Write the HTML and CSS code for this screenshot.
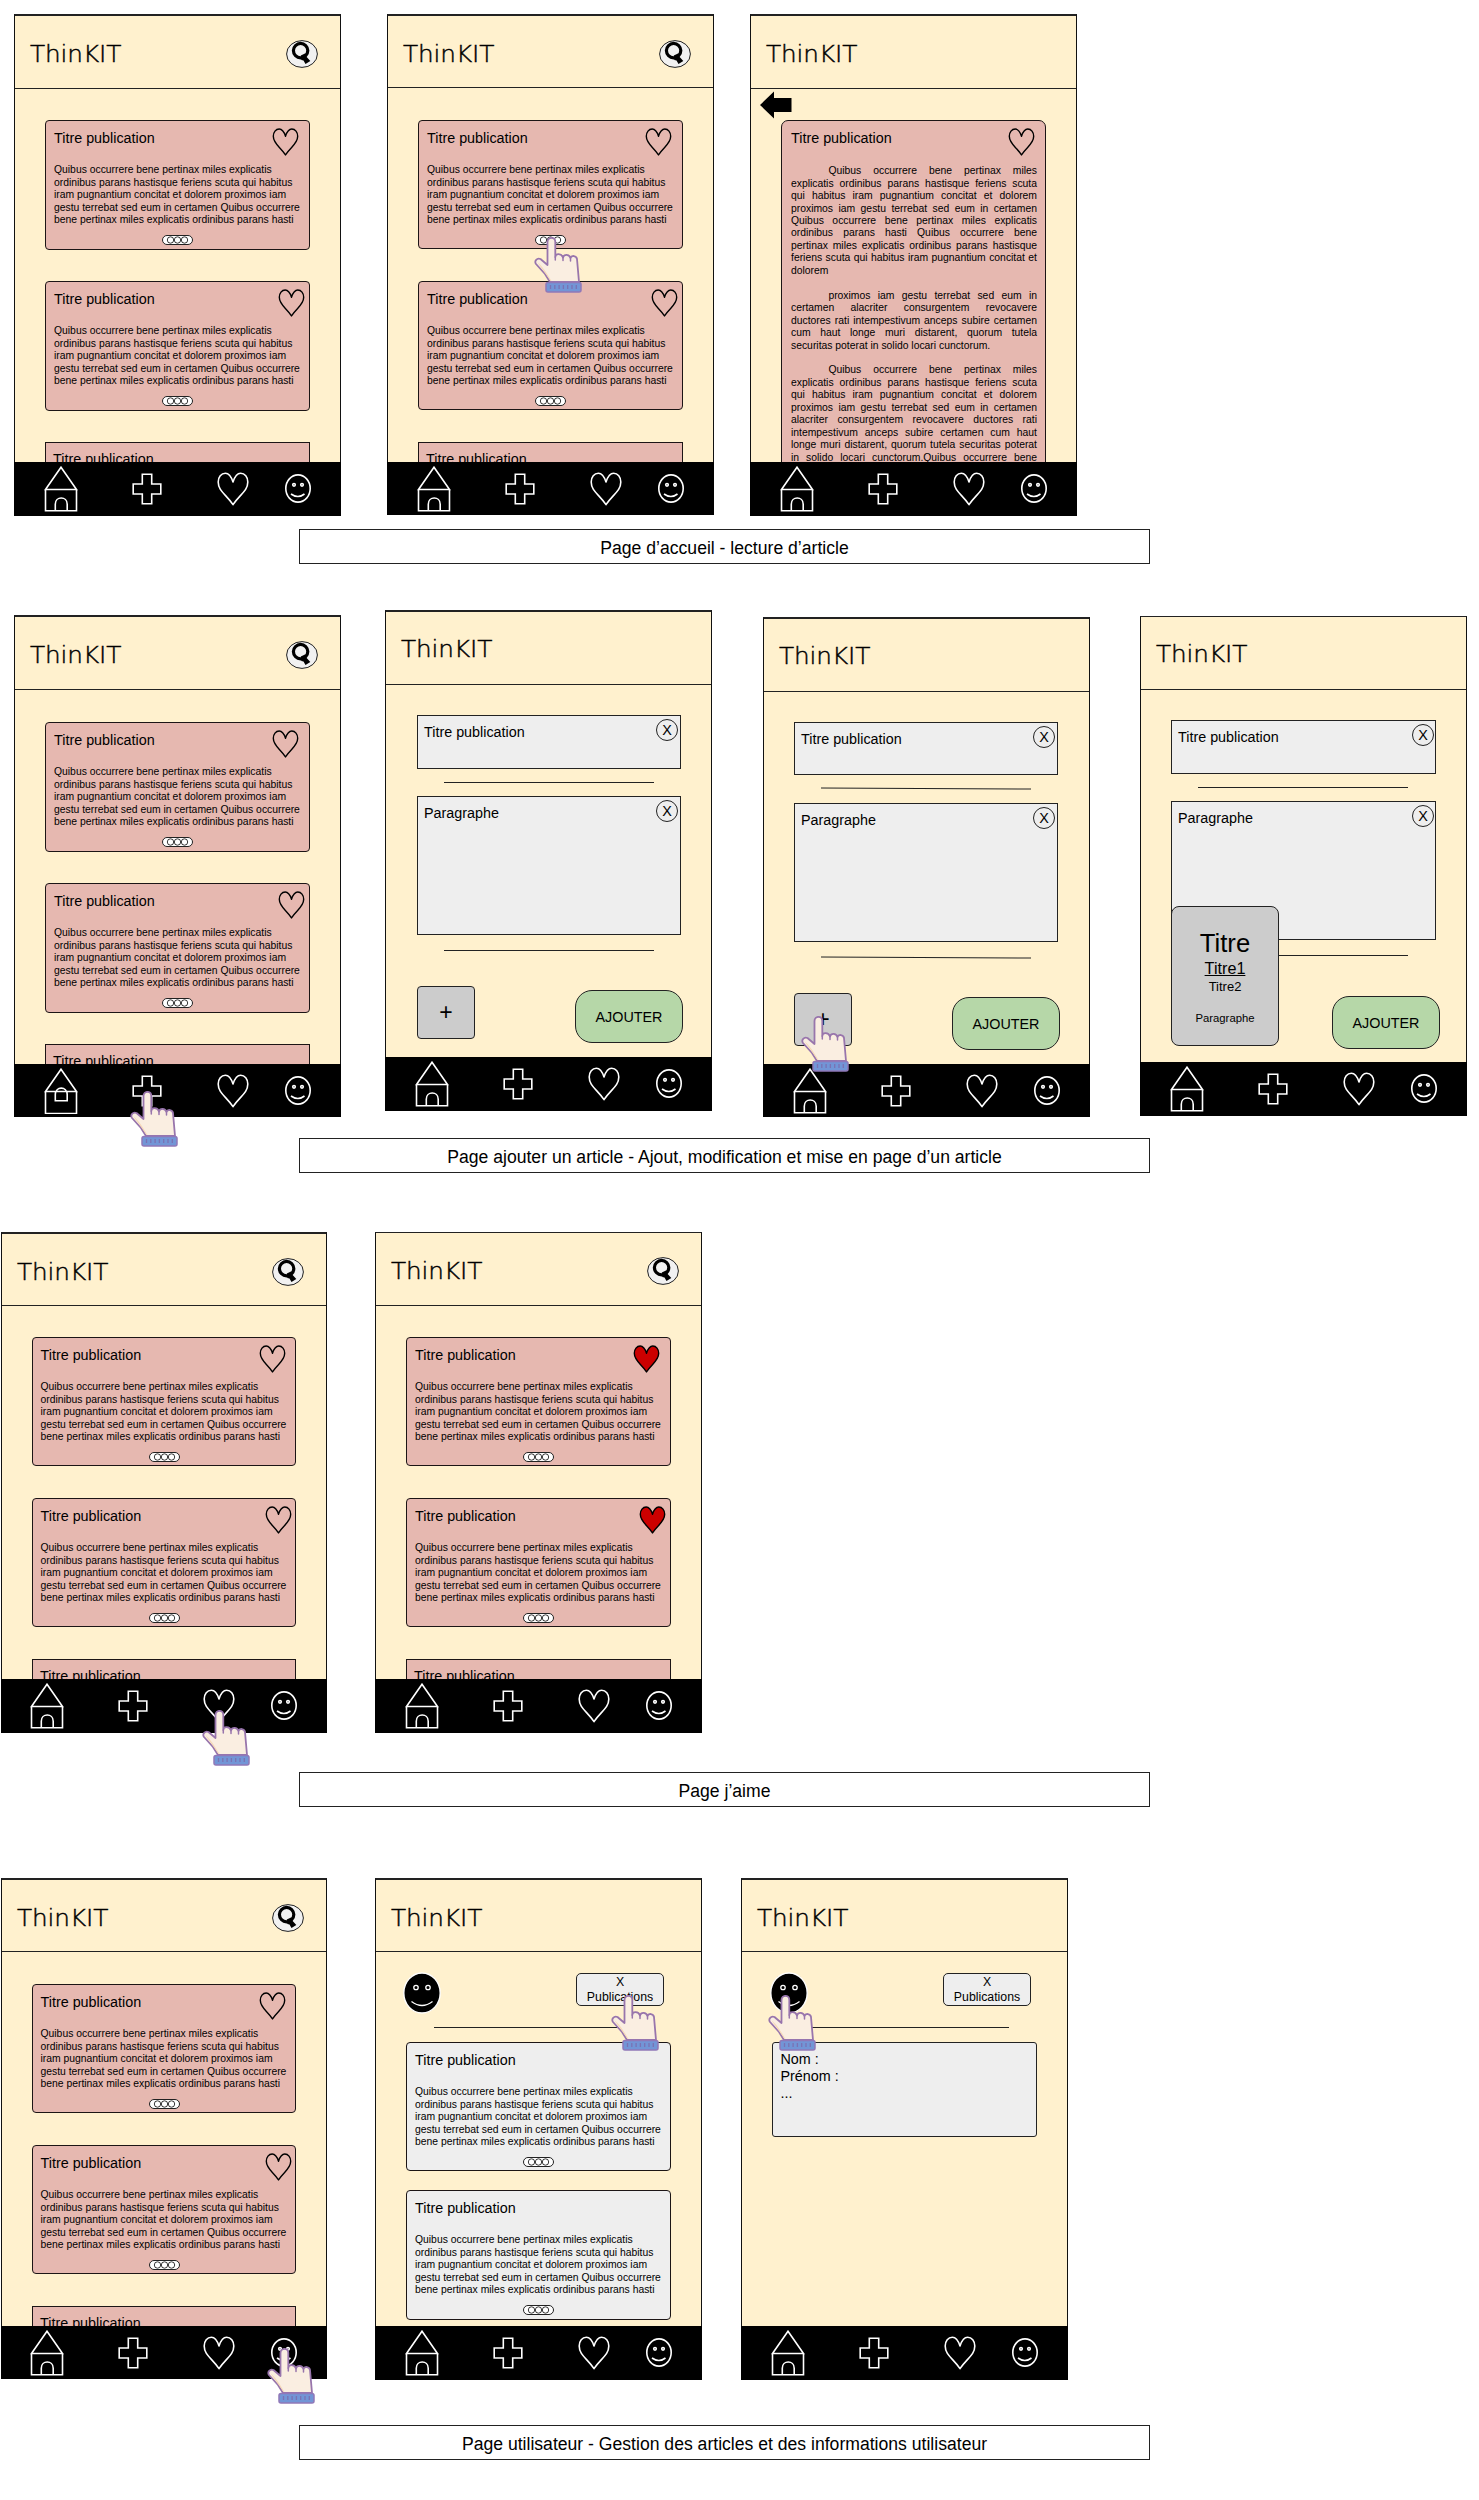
FILE: index.html
```html
<!DOCTYPE html>
<html lang="fr">
<head>
<meta charset="utf-8">
<title>ThinKIT - maquettes</title>
<link rel="stylesheet" href="styles.css">
</head>
<body>
<svg class="sprite" aria-hidden="true">
  <symbol id="search" viewBox="0 0 32 28">
    <ellipse cx="16" cy="14" rx="15.4" ry="13.4" fill="#f1f1f1" stroke="#222" stroke-width="1"/>
    <circle cx="14.6" cy="10.600" r="7.200" fill="none" stroke="#000" stroke-width="3.200"/>
    <path d="M14.8 15.500L19.5 13.200L20.200 16.500L24.300 21L19.5 24L17.5 20.500L15.3 20Z"/>
  </symbol>
  <symbol id="heart" viewBox="0 0 32 34">
    <path d="M16 10C14.4 5.200 11.900 1.300 8.400 1.300C4.200 1.300 1.200 5.100 1.200 10.100C1.200 19.300 9.800 22.800 16 32.700C22.200 22.800 30.800 19.300 30.800 10.100C30.800 5.100 27.800 1.300 23.600 1.300C20.100 1.300 17.600 5.200 16 10Z" stroke-linejoin="round"/>
  </symbol>
  <symbol id="house" viewBox="0 0 34 46">
    <path d="M1.500 23.500L17 1.200L32.500 23.500ZM1.500 23.500V44.700H32.500V23.500M11.300 44.700V38.200C11.300 30 23.200 30 23.200 38.200V44.700"/>
  </symbol>
  <symbol id="house-up" viewBox="0 0 34 46">
    <path d="M1.500 23.500L17 1.200L32.500 23.500ZM1.500 23.500V45.500H32.500V23.500M11.300 32.800V26.500C11.300 18 23.200 18 23.200 26.500V32.800Z"/>
  </symbol>
  <symbol id="plus" viewBox="0 0 30 32">
    <path d="M10.300 1.200H19.700V11H28.800V21H19.700V30.800H10.300V21H1.200V11H10.300Z"/>
  </symbol>
  <symbol id="smile" viewBox="0 0 26 29">
    <ellipse cx="13" cy="14.500" rx="12.200" ry="13.600"/>
    <circle cx="9" cy="10.800" r="1.300"/><circle cx="17" cy="10.800" r="1.300"/>
    <path d="M6 20Q13 25 19.500 20"/>
  </symbol>
  <symbol id="face" viewBox="0 0 38 42">
    <ellipse cx="19" cy="21" rx="18.200" ry="20" fill="#000" stroke="#fff" stroke-width="1.400"/>
    <g fill="none" stroke="#fff" stroke-width="1.300"><circle cx="13" cy="15.500" r="2.200"/><circle cx="25" cy="15.500" r="2.200"/><path d="M8.500 29.500Q19 37.500 29.500 29.500"/></g>
  </symbol>
  <symbol id="dots" viewBox="0 0 31 10">
    <rect x=".5" y=".5" width="30" height="9" rx="4.500" fill="#fff" stroke="#222"/>
    <g fill="#fff" stroke="#222" stroke-width=".9"><circle cx="8.500" cy="5" r="3.200"/><circle cx="15.500" cy="5" r="3.200"/><circle cx="22.500" cy="5" r="3.200"/></g>
  </symbol>
  <symbol id="hand" viewBox="0 0 48 56">
    <path d="M16 45L11 37L2 27C0 24 3 20.500 6.500 22L13.500 28V5C13.500 -0.500 21.300 -0.500 21.300 5V20C21.500 16 27.500 16 29 20.500C30 17 35 17 36.500 21C37.500 18 42.500 18.500 43 22L45 45Z" fill="#faeee1" stroke="#9875ac" stroke-width="1.800" stroke-linejoin="round"/>
    <path d="M3.500 25.500C8 29 11 33 17.500 44H16.500L11 36Z" fill="#f6d9b8"/>
    <path d="M21.300 20V23M29 20.500V23.500M36.500 21V24" stroke="#9875ac" stroke-width="1.500" stroke-linecap="round"/>
    <rect x="12" y="45.500" width="35" height="9.500" rx="2" fill="#7295d6" stroke="#9078b8" stroke-width="1.500"/>
    <path d="M16.500 48V52M20.800 48V52M25.100 48V52M29.400 48V52M33.700 48V52M38 48V52M42.300 48V52" stroke="#7a72b4" stroke-width="1.300"/>
  </symbol>
</svg>

<section>
  <div class="board b1">
    <div class="phone p1">
      <header><span class="logo">ThinKIT</span><svg class="search"><use href="#search"/></svg></header>
      <main class="feed">
        <article class="card"><h2>Titre publication</h2><p>Quibus occurrere bene pertinax miles explicatis<br>ordinibus parans hastisque feriens scuta qui habitus<br>iram pugnantium concitat et dolorem proximos iam<br>gestu terrebat sed eum in certamen Quibus occurrere<br>bene pertinax miles explicatis ordinibus parans hasti</p><svg class="dots"><use href="#dots"/></svg><svg class="like"><use href="#heart"/></svg></article>
        <article class="card"><h2>Titre publication</h2><p>Quibus occurrere bene pertinax miles explicatis<br>ordinibus parans hastisque feriens scuta qui habitus<br>iram pugnantium concitat et dolorem proximos iam<br>gestu terrebat sed eum in certamen Quibus occurrere<br>bene pertinax miles explicatis ordinibus parans hasti</p><svg class="dots"><use href="#dots"/></svg><svg class="like"><use href="#heart"/></svg></article>
        <article class="card"><h2>Titre publication</h2></article>
      </main>
      <nav><svg class="house"><use href="#house"/></svg><svg class="plus"><use href="#plus"/></svg><svg class="heart"><use href="#heart"/></svg><svg class="smile"><use href="#smile"/></svg></nav>
    </div>
    <div class="phone p2">
      <header><span class="logo">ThinKIT</span><svg class="search"><use href="#search"/></svg></header>
      <main class="feed">
        <article class="card"><h2>Titre publication</h2><p>Quibus occurrere bene pertinax miles explicatis<br>ordinibus parans hastisque feriens scuta qui habitus<br>iram pugnantium concitat et dolorem proximos iam<br>gestu terrebat sed eum in certamen Quibus occurrere<br>bene pertinax miles explicatis ordinibus parans hasti</p><svg class="dots"><use href="#dots"/></svg><svg class="like"><use href="#heart"/></svg></article>
        <article class="card"><h2>Titre publication</h2><p>Quibus occurrere bene pertinax miles explicatis<br>ordinibus parans hastisque feriens scuta qui habitus<br>iram pugnantium concitat et dolorem proximos iam<br>gestu terrebat sed eum in certamen Quibus occurrere<br>bene pertinax miles explicatis ordinibus parans hasti</p><svg class="dots"><use href="#dots"/></svg><svg class="like"><use href="#heart"/></svg></article>
        <article class="card"><h2>Titre publication</h2></article>
      </main>
      <nav><svg class="house"><use href="#house"/></svg><svg class="plus"><use href="#plus"/></svg><svg class="heart"><use href="#heart"/></svg><svg class="smile"><use href="#smile"/></svg></nav>
      <svg class="hand"><use href="#hand"/></svg>
    </div>
    <div class="phone p3">
      <header><span class="logo">ThinKIT</span></header>
      <main class="reader">
        <svg class="back" viewBox="0 0 32 28"><path d="M0 14L14 0.500V7H31.500V21H14V27.500Z"/></svg>
        <article class="card full"><h2>Titre publication</h2>
          <p>Quibus occurrere bene pertinax miles explicatis ordinibus parans hastisque feriens scuta qui habitus iram pugnantium concitat et dolorem proximos iam gestu terrebat sed eum in certamen Quibus occurrere bene pertinax miles explicatis ordinibus parans hasti Quibus occurrere bene pertinax miles explicatis ordinibus parans hastisque feriens scuta qui habitus iram pugnantium concitat et dolorem</p>
          <p>proximos iam gestu terrebat sed eum in certamen alacriter consurgentem revocavere ductores rati intempestivum anceps subire certamen cum haut longe muri distarent, quorum tutela securitas poterat in solido locari cunctorum.</p>
          <p>Quibus occurrere bene pertinax miles explicatis ordinibus parans hastisque feriens scuta qui habitus iram pugnantium concitat et dolorem proximos iam gestu terrebat sed eum in certamen alacriter consurgentem revocavere ductores rati intempestivum anceps subire certamen cum haut longe muri distarent, quorum tutela securitas poterat in solido locari cunctorum.Quibus occurrere bene pertinax miles</p>
          <svg class="like"><use href="#heart"/></svg>
        </article>
      </main>
      <nav><svg class="house"><use href="#house"/></svg><svg class="plus"><use href="#plus"/></svg><svg class="heart"><use href="#heart"/></svg><svg class="smile"><use href="#smile"/></svg></nav>
    </div>
  </div>
  <div class="caption">Page d’accueil - lecture d’article</div>
</section>

<section>
  <div class="board b2">
    <div class="phone p4">
      <header><span class="logo">ThinKIT</span><svg class="search"><use href="#search"/></svg></header>
      <main class="feed">
        <article class="card"><h2>Titre publication</h2><p>Quibus occurrere bene pertinax miles explicatis<br>ordinibus parans hastisque feriens scuta qui habitus<br>iram pugnantium concitat et dolorem proximos iam<br>gestu terrebat sed eum in certamen Quibus occurrere<br>bene pertinax miles explicatis ordinibus parans hasti</p><svg class="dots"><use href="#dots"/></svg><svg class="like"><use href="#heart"/></svg></article>
        <article class="card"><h2>Titre publication</h2><p>Quibus occurrere bene pertinax miles explicatis<br>ordinibus parans hastisque feriens scuta qui habitus<br>iram pugnantium concitat et dolorem proximos iam<br>gestu terrebat sed eum in certamen Quibus occurrere<br>bene pertinax miles explicatis ordinibus parans hasti</p><svg class="dots"><use href="#dots"/></svg><svg class="like"><use href="#heart"/></svg></article>
        <article class="card"><h2>Titre publication</h2></article>
      </main>
      <nav><svg class="house"><use href="#house-up"/></svg><svg class="plus"><use href="#plus"/></svg><svg class="heart"><use href="#heart"/></svg><svg class="smile"><use href="#smile"/></svg></nav>
      <svg class="hand"><use href="#hand"/></svg>
    </div>
    <div class="phone p5">
      <header><span class="logo">ThinKIT</span></header>
      <main class="editor">
        <div class="field small"><span>Titre publication</span><b class="close">X</b></div>
        <hr>
        <div class="field big"><span>Paragraphe</span><b class="close">X</b></div>
        <hr>
        <div class="actions"><span class="add">+</span><span class="submit">AJOUTER</span></div>
      </main>
      <nav><svg class="house"><use href="#house"/></svg><svg class="plus"><use href="#plus"/></svg><svg class="heart"><use href="#heart"/></svg><svg class="smile"><use href="#smile"/></svg></nav>
    </div>
    <div class="phone p6">
      <header><span class="logo">ThinKIT</span></header>
      <main class="editor">
        <div class="field small"><span>Titre publication</span><b class="close">X</b></div>
        <hr>
        <div class="field big"><span>Paragraphe</span><b class="close">X</b></div>
        <hr>
        <div class="actions"><span class="add">+</span><span class="submit">AJOUTER</span></div>
      </main>
      <nav><svg class="house"><use href="#house"/></svg><svg class="plus"><use href="#plus"/></svg><svg class="heart"><use href="#heart"/></svg><svg class="smile"><use href="#smile"/></svg></nav>
      <svg class="hand"><use href="#hand"/></svg>
    </div>
    <div class="phone p7">
      <header><span class="logo">ThinKIT</span></header>
      <main class="editor">
        <div class="field small"><span>Titre publication</span><b class="close">X</b></div>
        <hr>
        <div class="field big"><span>Paragraphe</span><b class="close">X</b></div>
        <hr>
        <div class="actions"><span class="submit">AJOUTER</span></div>
      </main>
      <nav><svg class="house"><use href="#house"/></svg><svg class="plus"><use href="#plus"/></svg><svg class="heart"><use href="#heart"/></svg><svg class="smile"><use href="#smile"/></svg></nav>
      <div class="menu"><span class="m0">Titre</span><span class="m1">Titre1</span><span class="m2">Titre2</span><span class="m3">Paragraphe</span></div>
    </div>
  </div>
  <div class="caption">Page ajouter un article - Ajout, modification et mise en page d’un article</div>
</section>

<section>
  <div class="board b3">
    <div class="phone p8">
      <header><span class="logo">ThinKIT</span><svg class="search"><use href="#search"/></svg></header>
      <main class="feed">
        <article class="card"><h2>Titre publication</h2><p>Quibus occurrere bene pertinax miles explicatis<br>ordinibus parans hastisque feriens scuta qui habitus<br>iram pugnantium concitat et dolorem proximos iam<br>gestu terrebat sed eum in certamen Quibus occurrere<br>bene pertinax miles explicatis ordinibus parans hasti</p><svg class="dots"><use href="#dots"/></svg><svg class="like"><use href="#heart"/></svg></article>
        <article class="card"><h2>Titre publication</h2><p>Quibus occurrere bene pertinax miles explicatis<br>ordinibus parans hastisque feriens scuta qui habitus<br>iram pugnantium concitat et dolorem proximos iam<br>gestu terrebat sed eum in certamen Quibus occurrere<br>bene pertinax miles explicatis ordinibus parans hasti</p><svg class="dots"><use href="#dots"/></svg><svg class="like"><use href="#heart"/></svg></article>
        <article class="card"><h2>Titre publication</h2></article>
      </main>
      <nav><svg class="house"><use href="#house"/></svg><svg class="plus"><use href="#plus"/></svg><svg class="heart"><use href="#heart"/></svg><svg class="smile"><use href="#smile"/></svg></nav>
      <svg class="hand"><use href="#hand"/></svg>
    </div>
    <div class="phone p9">
      <header><span class="logo">ThinKIT</span><svg class="search"><use href="#search"/></svg></header>
      <main class="feed liked">
        <article class="card"><h2>Titre publication</h2><p>Quibus occurrere bene pertinax miles explicatis<br>ordinibus parans hastisque feriens scuta qui habitus<br>iram pugnantium concitat et dolorem proximos iam<br>gestu terrebat sed eum in certamen Quibus occurrere<br>bene pertinax miles explicatis ordinibus parans hasti</p><svg class="dots"><use href="#dots"/></svg><svg class="like"><use href="#heart"/></svg></article>
        <article class="card"><h2>Titre publication</h2><p>Quibus occurrere bene pertinax miles explicatis<br>ordinibus parans hastisque feriens scuta qui habitus<br>iram pugnantium concitat et dolorem proximos iam<br>gestu terrebat sed eum in certamen Quibus occurrere<br>bene pertinax miles explicatis ordinibus parans hasti</p><svg class="dots"><use href="#dots"/></svg><svg class="like"><use href="#heart"/></svg></article>
        <article class="card"><h2>Titre publication</h2></article>
      </main>
      <nav><svg class="house"><use href="#house"/></svg><svg class="plus"><use href="#plus"/></svg><svg class="heart"><use href="#heart"/></svg><svg class="smile"><use href="#smile"/></svg></nav>
    </div>
  </div>
  <div class="caption">Page j’aime</div>
</section>

<section>
  <div class="board b4">
    <div class="phone p10">
      <header><span class="logo">ThinKIT</span><svg class="search"><use href="#search"/></svg></header>
      <main class="feed">
        <article class="card"><h2>Titre publication</h2><p>Quibus occurrere bene pertinax miles explicatis<br>ordinibus parans hastisque feriens scuta qui habitus<br>iram pugnantium concitat et dolorem proximos iam<br>gestu terrebat sed eum in certamen Quibus occurrere<br>bene pertinax miles explicatis ordinibus parans hasti</p><svg class="dots"><use href="#dots"/></svg><svg class="like"><use href="#heart"/></svg></article>
        <article class="card"><h2>Titre publication</h2><p>Quibus occurrere bene pertinax miles explicatis<br>ordinibus parans hastisque feriens scuta qui habitus<br>iram pugnantium concitat et dolorem proximos iam<br>gestu terrebat sed eum in certamen Quibus occurrere<br>bene pertinax miles explicatis ordinibus parans hasti</p><svg class="dots"><use href="#dots"/></svg><svg class="like"><use href="#heart"/></svg></article>
        <article class="card"><h2>Titre publication</h2></article>
      </main>
      <nav><svg class="house"><use href="#house"/></svg><svg class="plus"><use href="#plus"/></svg><svg class="heart"><use href="#heart"/></svg><svg class="smile"><use href="#smile"/></svg></nav>
      <svg class="hand"><use href="#hand"/></svg>
    </div>
    <div class="phone p11">
      <header><span class="logo">ThinKIT</span></header>
      <main class="profile">
        <div class="user"><svg class="face"><use href="#face"/></svg><span class="count">X<br>Publications</span></div>
        <hr>
        <article class="card grey"><h2>Titre publication</h2><p>Quibus occurrere bene pertinax miles explicatis<br>ordinibus parans hastisque feriens scuta qui habitus<br>iram pugnantium concitat et dolorem proximos iam<br>gestu terrebat sed eum in certamen Quibus occurrere<br>bene pertinax miles explicatis ordinibus parans hasti</p><svg class="dots"><use href="#dots"/></svg></article>
        <article class="card grey"><h2>Titre publication</h2><p>Quibus occurrere bene pertinax miles explicatis<br>ordinibus parans hastisque feriens scuta qui habitus<br>iram pugnantium concitat et dolorem proximos iam<br>gestu terrebat sed eum in certamen Quibus occurrere<br>bene pertinax miles explicatis ordinibus parans hasti</p><svg class="dots"><use href="#dots"/></svg></article>
      </main>
      <nav><svg class="house"><use href="#house"/></svg><svg class="plus"><use href="#plus"/></svg><svg class="heart"><use href="#heart"/></svg><svg class="smile"><use href="#smile"/></svg></nav>
      <svg class="hand"><use href="#hand"/></svg>
    </div>
    <div class="phone p12">
      <header><span class="logo">ThinKIT</span></header>
      <main class="profile">
        <div class="user"><svg class="face"><use href="#face"/></svg><span class="count">X<br>Publications</span></div>
        <hr>
        <div class="infos">Nom :<br>Prénom :<br>...</div>
      </main>
      <nav><svg class="house"><use href="#house"/></svg><svg class="plus"><use href="#plus"/></svg><svg class="heart"><use href="#heart"/></svg><svg class="smile"><use href="#smile"/></svg></nav>
      <svg class="hand"><use href="#hand"/></svg>
    </div>
  </div>
  <div class="caption">Page utilisateur - Gestion des articles et des informations utilisateur</div>
</section>
</body>
</html>
```
FILE: styles.css
```css
* { box-sizing: border-box; }
body {
  margin: 0;
  width: 1479px;
  height: 2500px;
  background: #fff;
  color: #000;
  font-family: "Liberation Sans", Arial, sans-serif;
  font-size: 14.35px;
}
svg { display: block; flex: none; }
.sprite { position: absolute; width: 0; height: 0; }

/* boards */
.board { display: flex; align-items: flex-start; }
.b1 { height: 529px; }
.b2 { height: 574px; }
.b3 { height: 599px; }
.b4 { height: 618px; }
.caption {
  width: 851px;
  height: 35px;
  margin-left: 299px;
  padding-top: 3px;
  border: 1px solid #222;
  display: flex;
  align-items: center;
  justify-content: center;
  font-size: 17.6px;
}

/* phone frame */
.phone {
  --line: 2px;
  --head: 73px;
  --body: 373px;
  --nav: 54px;
  position: relative;
  flex: none;
  width: 327px;
  background: #fff1ce;
  border: 1px solid #111;
  border-top: var(--line) solid #222;
  border-bottom: 0;
}
.p1 { margin: 14px 0 0 14px; }
.p2 { margin: 14px 0 0 46px; --head: 72px; --body: 374px; --nav: 53px; }
.p3 { margin: 14px 0 0 36px; }
.p4 { margin: 51px 0 0 14px; --body: 374px; --nav: 53px; }
.p5 { margin: 46px 0 0 44px; --body: 372px; }
.p6 { margin: 53px 0 0 51px; --body: 372px; --nav: 53px; }
.p7 { margin: 52px 0 0 50px; --line: 1px; --body: 372px; }
.p8 { margin: 59px 1px 0 1px; width: 326px; --head: 72px; }
.p9 { margin: 59px 0 0 47px; --line: 1px; }
.p10 { margin: 71px 1px 0 1px; width: 326px; --head: 72px; --body: 374px; --nav: 53px; }
.p11 { margin: 71px 0 0 47px; --head: 72px; --body: 374px; }
.p12 { margin: 71px 0 0 39px; --head: 72px; --body: 374px; }

header {
  height: var(--head);
  border-bottom: 1px solid #222;
  display: flex;
  align-items: flex-start;
  justify-content: space-between;
  padding: 24px 22px 0 15px;
}
.logo {
  font-family: "DejaVu Sans", sans-serif;
  font-weight: 200;
  font-size: 22.5px;
  line-height: 28px;
  letter-spacing: -.1px;
  transform: scaleX(1.1);
  transform-origin: 0 0;
  -webkit-text-stroke: .4px #000;
}
.p5 header, .p6 header, .p7 header { padding-top: 23px; }
.search { width: 32px; height: 28px; }
main { height: var(--body); overflow: hidden; }
nav {
  height: var(--nav);
  margin: 0 -1px;
  background: #000;
  display: flex;
  align-items: flex-start;
  fill: none;
  stroke: #fff;
  stroke-width: 1.6px;
}
.house { width: 34px; height: 46px; margin: 4px 0 0 30px; }
.plus { width: 30px; height: 32px; margin: 11px 0 0 54px; }
.heart { width: 32px; height: 34px; margin: 10px 0 0 55px; }
.smile { width: 26px; height: 29px; margin: 12px 0 0 36px; }
.p8 .house, .p10 .house { margin-left: 29.4px; }

/* cards */
.feed { padding: 31px 30px 0; display: flex; flex-direction: column; gap: 31px; }
.p2 .feed { padding-top: 32px; gap: 32px; }
.p4 .feed { padding-top: 32px; }
.p8 .feed, .p9 .feed { gap: 32px; }
.p10 .feed { padding-top: 32px; gap: 32px; }
.p2 .card, .p8 .card, .p9 .card, .p10 .card { height: 129px; }
.card {
  position: relative;
  flex: none;
  width: 265px;
  height: 130px;
  padding: 9px 0 0 8px;
  border: 1px solid #1c1515;
  border-radius: 4px;
  background: #e6b8b0;
}
.p8 .card, .p10 .card { width: 264px; padding-left: 7.5px; }
.feed .card:last-child { border-radius: 0; padding: 8px 0 0 7px; }
.card h2 { margin: 0 0 17.4px; font-size: 14.35px; line-height: 17px; font-weight: 400; }
.card p { margin: 0; font-size: 10.36px; line-height: 12.45px; white-space: nowrap; }
.dots { width: 31px; height: 10px; margin: 8px auto 0 108px; }
.like {
  position: absolute;
  left: 226px;
  top: 7px;
  width: 27px;
  height: 28px;
  fill: none;
  stroke: #000;
  stroke-width: 1.7px;
}
.card:nth-child(2) .like { left: 232px; }
.liked .like { fill: #c00; }
.grey { background: #eee; }

/* article reader */
.reader { padding: 2px 30px 0; }
.back { width: 32px; height: 28px; margin: 0 0 1px -21px; }
.full { height: 400px; padding: 9px 9px 0 9px; border-radius: 7px; }
.full h2 { margin-bottom: 18.2px; }
.full p {
  width: 246px;
  margin-bottom: 12.45px;
  white-space: normal;
  text-align: justify;
  text-indent: 37.4px;
}
.reader .full .like { left: 226px; }

/* editor */
.editor { padding: 30px 30px 0 31px; }
.p6 .editor, .p7 .editor { padding-left: 30px; }
.field {
  width: 264px;
  border: 1px solid #222;
  background: #eee;
  display: flex;
  align-items: flex-start;
  justify-content: space-between;
  padding: 3px 2px 0 6px;
}
.p7 .field { width: 265px; padding-right: 1px; }
.field span { line-height: 17px; padding-top: 5px; }
.small { height: 54px; }
.big { height: 139px; }
.close {
  width: 22px;
  height: 22px;
  border: 1px solid #222;
  border-radius: 50%;
  font-weight: 400;
  line-height: 21px;
  text-align: center;
}
hr { width: 210px; height: 1px; margin: 13px 0 13px 27px; border: 0; background: #222; }
.p6 hr { transform: rotate(.3deg); }
.editor .big + hr { margin: 15px 0 35px 27px; }
.actions { display: flex; justify-content: space-between; align-items: flex-start; width: 266px; }
.p7 .actions { width: 269px; }
.add {
  width: 58px;
  height: 53px;
  border: 1px solid #222;
  border-radius: 4px;
  background: #ccc;
  font-size: 23px;
  line-height: 50px;
  text-align: center;
}
.submit {
  width: 108px;
  height: 53px;
  margin: 4px 0 0 auto;
  border: 1px solid #222;
  border-radius: 17px;
  background: #b6d7a8;
  line-height: 53px;
  text-align: center;
}
.p7 .submit { margin-top: 5px; }
.p6 .small { height: 53px; }
.p6 hr { margin-bottom: 14px; }
.menu {
  position: absolute;
  left: 30px;
  top: 289px;
  width: 108px;
  height: 140px;
  padding-top: 21px;
  border: 1px solid #222;
  border-radius: 8px;
  background: #ccc;
  display: flex;
  flex-direction: column;
  align-items: center;
}
.m0 { font-size: 25.7px; line-height: 30px; }
.m1 { font-size: 16.2px; line-height: 20px; text-decoration: underline; }
.m2 { font-size: 13px; line-height: 18px; }
.m3 { font-size: 11.3px; line-height: 14px; margin-top: 15px; }

/* profile */
.profile { padding: 20px 30px 0 30px; }
.user { display: flex; justify-content: space-between; align-items: flex-start; margin-left: -2px; padding-right: 7px; }
.p11 .user { margin-left: -3px; }
.p12 .user { padding-right: 6px; }
.face { width: 38px; height: 42px; }
.count {
  width: 88px;
  height: 33px;
  margin-top: 1px;
  border: 1px solid #222;
  border-radius: 5px;
  background: #eee;
  font-size: 12.3px;
  line-height: 15.4px;
  padding-top: 1px;
  text-align: center;
}
.profile hr { width: 209px; margin: 13px 0 14px 28px; }
.profile .card { height: 129px; margin-bottom: 19px; }
.profile .card + .card { height: 130px; }
.infos {
  width: 265px;
  height: 95px;
  padding: 8px 7.5px;
  border: 1px solid #222;
  border-radius: 3px;
  background: #eee;
  line-height: 16.8px;
}

/* pointers */
.hand { position: absolute; width: 48px; height: 56px; }
.p2 .hand { left: 146px; top: 221px; }
.p4 .hand { left: 114.5px; top: 474px; }
.p6 .hand { left: 37px; top: 397px; }
.p8 .hand { left: 199.5px; top: 476px; }
.p10 .hand { left: 265px; top: 468px; }
.p11 .hand { left: 235px; top: 114.5px; }
.p12 .hand { left: 26px; top: 114.5px; }
```
